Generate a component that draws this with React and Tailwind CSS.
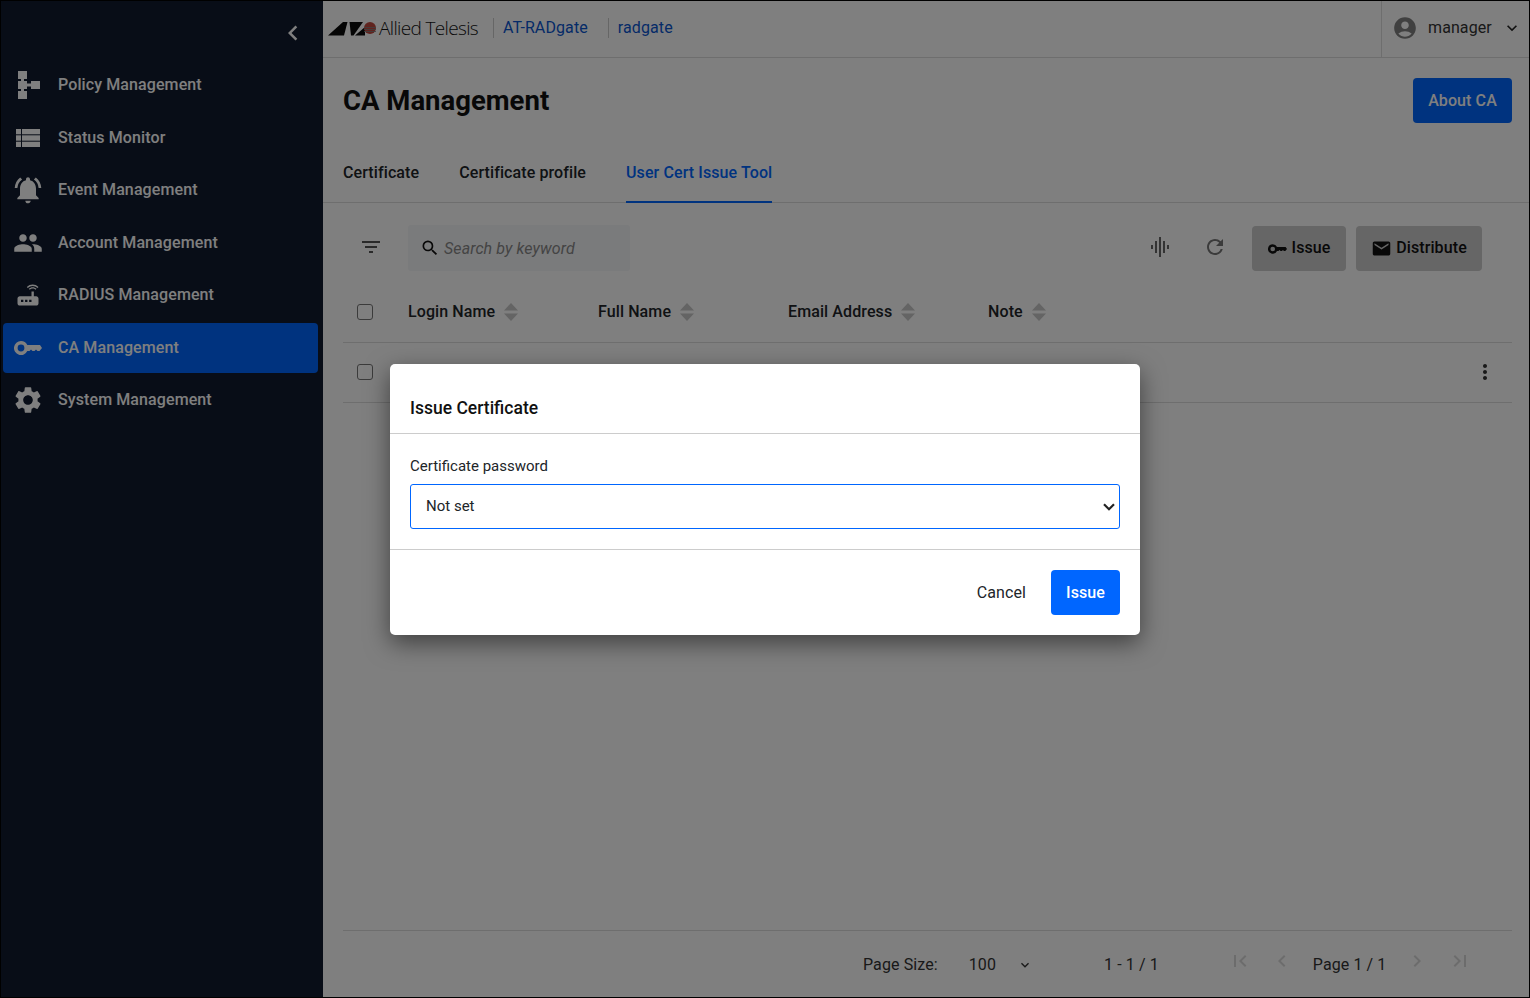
import {
  MdPeople,
  MdSettings,
  MdAccountCircle,
  MdKeyboardArrowDown,
  MdChevronLeft,
  MdChevronRight,
  MdFirstPage,
  MdLastPage,
  MdFilterList,
  MdSearch,
  MdGraphicEq,
  MdRefresh,
  MdEmail,
  MdMoreVert,
  MdRouter,
  MdNotificationsActive,
} from 'react-icons/md';

function PolicyIcon({ className }) {
  return (
    <svg viewBox="0 0 22 28" className={className} fill="currentColor">
      <rect x="0" y="0" width="9" height="8" />
      <rect x="0" y="10" width="9" height="8" />
      <rect x="0" y="20" width="9" height="8" />
      <rect x="3" y="6" width="3" height="16" />
      <rect x="8" y="12.5" width="6" height="3" />
      <rect x="13" y="10" width="9" height="8" />
    </svg>
  );
}

function TableIcon({ className }) {
  return (
    <svg viewBox="0 0 24 18" className={className} fill="currentColor">
      <rect x="0" y="0" width="5" height="5.3" />
      <rect x="0" y="6.3" width="5" height="5.4" />
      <rect x="0" y="12.7" width="5" height="5.3" />
      <rect x="6" y="0" width="18" height="5.3" />
      <rect x="6" y="6.3" width="18" height="5.4" />
      <rect x="6" y="12.7" width="18" height="5.3" />
    </svg>
  );
}

// key with the bow on the left, as in the nav and the Issue button
function KeyIcon({ className }) {
  return (
    <svg viewBox="0 0 28 14" className={className} fill="currentColor">
      <path
        fillRule="evenodd"
        d="M7 0a7 7 0 0 1 6.3 4H26l2 3-2.5 3h-2L22 8.5 20.5 10h-2L17 8.5 15.5 10h-2.2A7 7 0 1 1 7 0Zm0 3.6a3.4 3.4 0 1 0 0 6.8 3.4 3.4 0 0 0 0-6.8Z"
      />
    </svg>
  );
}

function LogoMark() {
  return (
    <svg viewBox="0 0 49 15" className="w-[49px] h-[15px]">
      <path d="M0 14.5 L15 1 H19.5 L16 14.5 Z" fill="#0a0a0a" />
      <path d="M21.5 1 H35 L25.5 14.5 H23 Z" fill="#0a0a0a" />
      <path d="M27 14.5 L37 6 V14.5 Z" fill="#0a0a0a" />
      <circle cx="42" cy="7" r="6" fill="#c0483e" />
      <path d="M36 6.5 H48 M36 8.5 H48 M36 10.5 H48" stroke="#808080" strokeWidth="0.8" />
    </svg>
  );
}

function SortIcon() {
  return (
    <svg viewBox="0 0 14 18" className="w-[14px] h-[18px] text-[#c8c8c8]" fill="currentColor">
      <path d="M7 0 L14 7.5 H0 Z" />
      <path d="M0 10.5 H14 L7 18 Z" />
    </svg>
  );
}

function Checkbox() {
  return <span className="block w-4 h-4 rounded-[3px] border border-[#777] bg-white" />;
}

const navItems = [
  { label: 'Policy Management', icon: <PolicyIcon className="w-[22px] h-7 ml-[2px]" /> },
  { label: 'Status Monitor', icon: <TableIcon className="w-6 h-[18px]" /> },
  { label: 'Event Management', icon: <MdNotificationsActive className="w-[32px] h-[32px]" /> },
  { label: 'Account Management', icon: <MdPeople className="w-[30px] h-[30px]" /> },
  { label: 'RADIUS Management', icon: <MdRouter className="w-7 h-7" /> },
  { label: 'CA Management', icon: <KeyIcon className="w-[28px] h-[14px]" />, active: true },
  { label: 'System Management', icon: <MdSettings className="w-[32px] h-[32px]" /> },
];

const columns = [
  { label: 'Login Name', width: 'w-[190px]' },
  { label: 'Full Name', width: 'w-[190px]' },
  { label: 'Email Address', width: 'w-[200px]' },
  { label: 'Note', width: 'w-[120px]' },
];

function Sidebar() {
  return (
    <aside className="w-[322px] shrink-0 bg-[#101a2e] pl-[2px] pr-[5px] flex flex-col text-white">
      <div className="h-[59px] flex items-center justify-end pr-[10px] pt-[4px]">
        <MdChevronLeft className="w-[30px] h-[30px] text-white" />
      </div>
      <nav className="flex flex-col gap-[2.5px]">
        {navItems.map((item) => (
          <div
            key={item.label}
            className={
              item.active
                ? 'h-[50px] rounded-[4px] bg-[#0066ff] flex items-center'
                : 'h-[50px] rounded-[4px] flex items-center'
            }
          >
            <span className="w-[55px] pr-[5px] flex justify-center shrink-0">{item.icon}</span>
            <span className="text-base font-medium">{item.label}</span>
          </div>
        ))}
      </nav>
    </aside>
  );
}

function Header() {
  return (
    <header className="h-[57px] shrink-0 border-b border-[#ddd] flex items-center pb-[2px]">
      <div className="pl-[5px] flex items-center">
        <LogoMark />
        <span className="ml-[2px] font-['Open_Sans',sans-serif] font-light text-[19px] tracking-[-0.65px] text-[#111]">
          Allied Telesis
        </span>
      </div>
      <span className="ml-[15px] h-[20px] border-l border-[#ccc]" />
      <span className="ml-[9px] text-base text-[#0a56d0]">AT-RADgate</span>
      <span className="ml-[20px] h-[20px] border-l border-[#ccc]" />
      <span className="ml-[9px] text-base text-[#0a56d0]">radgate</span>
      <div className="ml-auto -mb-[2px] pb-[2px] h-[56px] w-[148px] border-l border-[#ddd] flex items-center pl-[10px]">
        <MdAccountCircle className="w-[26px] h-[26px] text-[#808080]" />
        <span className="ml-[10px] text-base text-[#333]">manager</span>
        <MdKeyboardArrowDown className="ml-[10px] w-5 h-5 text-[#222]" />
      </div>
    </header>
  );
}

function Toolbar() {
  return (
    <div className="h-[79px] shrink-0 pl-[85px] pr-[47px] pt-[22px] flex items-start relative">
      <MdFilterList className="absolute left-[36px] top-[32px] w-6 h-6 text-[#555]" />
      <div className="w-[222px] h-[46px] rounded-[3px] bg-[#f5f6f8] flex items-center pl-[12px] pt-[1px]">
        <MdSearch className="w-[20px] h-[20px] text-[#111] -mt-[1px]" />
        <span className="ml-[4px] text-base italic text-[#888]">Search by keyword</span>
      </div>
      <MdGraphicEq className="ml-auto mt-[10px] w-[24px] h-[24px] text-[#666]" />
      <MdRefresh className="ml-[31px] mt-[10px] w-[24px] h-[24px] text-[#777]" />
      <button className="ml-[25px] mt-[1px] h-[45px] w-[94px] rounded-[4px] bg-[#cccccc] flex items-center justify-center text-base font-medium text-[#111] pb-[1px]">
        <KeyIcon className="w-[19px] h-[10px] mr-[5px] mt-[1px]" />
        Issue
      </button>
      <button className="ml-[10px] mt-[1px] h-[45px] w-[126px] rounded-[4px] bg-[#cccccc] flex items-center justify-center text-base font-medium text-[#111] pb-[1px]">
        <MdEmail className="w-[21px] h-[21px] mr-[4px] mt-[1px]" />
        Distribute
      </button>
    </div>
  );
}

function Table() {
  return (
    <div className="flex-1 flex flex-col pl-[20px] pr-[17px]">
      <div className="h-[61px] border-b border-[#ddd] flex items-center pl-[14px]">
        <Checkbox />
        <div className="ml-[35px] flex">
          {columns.map((col) => (
            <div key={col.label} className={`${col.width} flex items-center gap-[9px] text-base font-medium text-[#212529]`}>
              {col.label}
              <SortIcon />
            </div>
          ))}
        </div>
      </div>
      <div className="h-[60px] border-b border-[#ddd] flex items-center pl-[14px] pr-[16px] pb-[1px]">
        <Checkbox />
        <MdMoreVert className="ml-auto w-6 h-6 text-[#333] -mr-[1px]" />
      </div>
      <div className="mt-auto h-[67px] border-t border-[#ddd] pt-[2px] flex items-center text-base text-[#333]">
        <span className="ml-[520px]">Page Size:</span>
        <span className="ml-[31px]">100</span>
        <MdKeyboardArrowDown className="ml-[21px] w-4 h-4" />
        <span className="ml-[71px]">1 - 1 / 1</span>
        <MdFirstPage className="ml-[69px] -mt-[9px] w-6 h-6 text-[#d8d8d8]" />
        <MdChevronLeft className="ml-[18px] -mt-[9px] w-6 h-6 text-[#d8d8d8]" />
        <span className="ml-[19px]">Page 1 / 1</span>
        <MdChevronRight className="ml-[19px] -mt-[9px] w-6 h-6 text-[#d8d8d8]" />
        <MdLastPage className="ml-[19px] -mt-[9px] w-6 h-6 text-[#d8d8d8]" />
      </div>
    </div>
  );
}

function IssueDialog() {
  return (
    <div className="absolute inset-0 z-10 bg-black/50 flex items-start justify-center pt-[363px]">
      <div className="w-[750px] rounded-[5px] bg-white shadow-[0_8px_24px_rgba(0,0,0,0.5)] text-[#212529]">
        <div className="h-[70px] border-b border-[#ccc] flex items-end px-[20px] pb-[13px]">
          <h2 className="text-[17.5px] tracking-normal font-medium leading-6 text-[#111]">Issue Certificate</h2>
        </div>
        <div className="h-[116px] border-b border-[#ccc] px-[20px] pt-[21px]">
          <label className="block text-[15px] tracking-normal leading-[22px]">Certificate password</label>
          <div className="relative mt-[7px]">
            <select className="appearance-none w-full h-[45px] rounded-[3px] border border-[#0066ff] bg-white pl-[15px] text-[15px] tracking-normal outline-none">
              <option>Not set</option>
            </select>
            <svg
              viewBox="0 0 12 8"
              className="absolute right-[5px] top-[19px] w-3 h-2 text-[#222]"
              fill="none"
              stroke="currentColor"
              strokeWidth="2.2"
            >
              <path d="M1 1.2 L6 6.2 L11 1.2" />
            </svg>
          </div>
        </div>
        <div className="h-[85px] flex items-center justify-end px-[20px]">
          <button className="text-base text-[#212529]">Cancel</button>
          <button className="ml-[25px] h-[45px] w-[69px] rounded-[4px] bg-[#0066ff] text-base font-medium text-white">
            Issue
          </button>
        </div>
      </div>
    </div>
  );
}

export default function App() {
  return (
    <div className="relative h-screen w-full border border-black bg-white flex overflow-hidden font-['Roboto',sans-serif] tracking-[0.1px]">
      <Sidebar />
      <main className="flex-1 min-w-0 flex flex-col">
        <Header />
        <div className="h-[85px] shrink-0 pl-[20px] pr-[17px] pt-[20px] flex items-start justify-between">
          <h1 className="text-[27.5px] tracking-normal leading-[45px] font-bold text-[#111]">CA Management</h1>
          <button className="h-[45px] w-[99px] rounded-[4px] bg-[#0066ff] text-base font-medium text-white">
            About CA
          </button>
        </div>
        <div className="h-[60px] shrink-0 border-b border-[#ddd] pl-[20px] flex gap-[40px]">
          <div className="h-[60px] flex items-center text-base font-medium text-[#212529]">Certificate</div>
          <div className="h-[60px] flex items-center text-base font-medium text-[#212529]">Certificate profile</div>
          <div className="h-[60px] pt-[2px] flex items-center text-base font-medium text-[#0066ff] border-b-2 border-[#0066ff]">
            User Cert Issue Tool
          </div>
        </div>
        <Toolbar />
        <Table />
      </main>
      <IssueDialog />
    </div>
  );
}
